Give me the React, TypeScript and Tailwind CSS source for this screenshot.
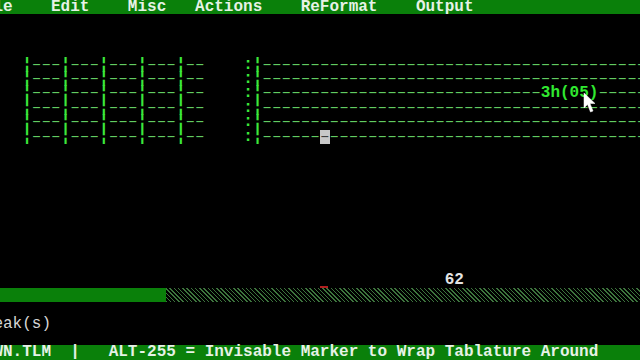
import React from "react";

const D = "–";

function dashes(n: number) {
  return D.repeat(n);
}

function Bar() {
  return <span className="text-[#3ce83c] font-bold">¦</span>;
}

function TabRow({ idx }: { idx: number }) {
  const left: React.ReactNode[] = [];
  for (let i = 0; i < 5; i++) {
    left.push(<Bar key={"b" + i} />);
    left.push(
      <span key={"d" + i} className="text-[#62cc62]">
        {dashes(i < 4 ? 3 : 2)}
      </span>
    );
  }
  let right: React.ReactNode;
  if (idx === 2) {
    right = (
      <>
        <span className="text-[#62cc62]">{dashes(29)}</span>
        <span className="text-[#30e830] font-bold">3h(05)</span>
        <span className="text-[#62cc62]">{dashes(10)}</span>
      </>
    );
  } else if (idx === 5) {
    right = (
      <>
        <span className="text-[#62cc62]">{dashes(6)}</span>
        <span className="inline-block h-[14.4px] bg-[#c8c8c8] text-[#404040]">{D}</span>
        <span className="text-[#62cc62]">{dashes(36)}</span>
      </>
    );
  } else {
    right = <span className="text-[#62cc62]">{dashes(44)}</span>;
  }
  return (
    <div className="h-[14.4px] whitespace-pre">
      {"   "}
      {left}
      {"    "}
      <span className="text-[#3ce83c] font-bold">:</span>
      <Bar />
      {right}
    </div>
  );
}

function Empty() {
  return <div className="h-[14.4px]" />;
}

export default function App() {
  return (
    <div
      className="relative w-[640px] h-[360px] bg-black overflow-hidden text-[16px] leading-[14.4px]"
      style={{ fontFamily: '"Liberation Mono", "DejaVu Sans Mono", monospace' }}
    >
      {/* row 0 menu */}
      <div className="h-[14.4px] bg-[#0a800a] text-[#e6f2e6] font-bold whitespace-pre">
        <div className="ml-[-6.6px]">{"le    Edit    Misc   Actions    ReFormat    Output"}</div>
      </div>
      <Empty />
      <Empty />
      <Empty />
      <div className="ml-[-6.6px]">
        {[0, 1, 2, 3, 4, 5].map((i) => (
          <TabRow key={i} idx={i} />
        ))}
      </div>
      {[10, 11, 12, 13, 14, 15, 16, 17, 18].map((i) => (
        <Empty key={i} />
      ))}
      {/* row 19 */}
      <div className="h-[14.4px] whitespace-pre text-[#e4e4e4] font-bold">
        <div className="ml-[-6.6px]">{" ".repeat(47) + "62"}</div>
      </div>
      {/* row 20 progress */}
      <div className="relative h-[14.4px] flex">
        <div className="w-[166px] h-full bg-[#0a800a]" />
        <div className="flex-1 h-full bg-[repeating-linear-gradient(45deg,#3d743d_0px,#3d743d_1px,#000_1px,#000_3px)]" />
        <div className="absolute left-[320px] top-[-2px] w-[8px] h-[2px] bg-[#b02020]" />
      </div>
      <Empty />
      {/* row 22 */}
      <div className="h-[14.4px] whitespace-pre text-[#d6d6d6]">
        <div className="ml-[-6.6px]">{"eak(s)"}</div>
      </div>
      <Empty />
      {/* row 24 status */}
      <div className="h-[14.4px] bg-[#0a800a] text-[#e6f2e6] font-bold whitespace-pre">
        <div className="ml-[-6.6px]">
          {"WN.TLM  |   ALT-255 = Invisable Marker to Wrap Tablature Around"}
        </div>
      </div>
      {/* mouse pointer */}
      <svg
        className="absolute left-[583px] top-[92px]"
        width="14"
        height="22"
        viewBox="0 0 14 22"
      >
        <path
          d="M1 1 L1 16 L4.5 12.5 L7.5 20 L10 19 L7 11.5 L12 11.5 Z"
          fill="#ffffff"
          stroke="#ffffff"
          strokeWidth="0.5"
        />
      </svg>
    </div>
  );
}
